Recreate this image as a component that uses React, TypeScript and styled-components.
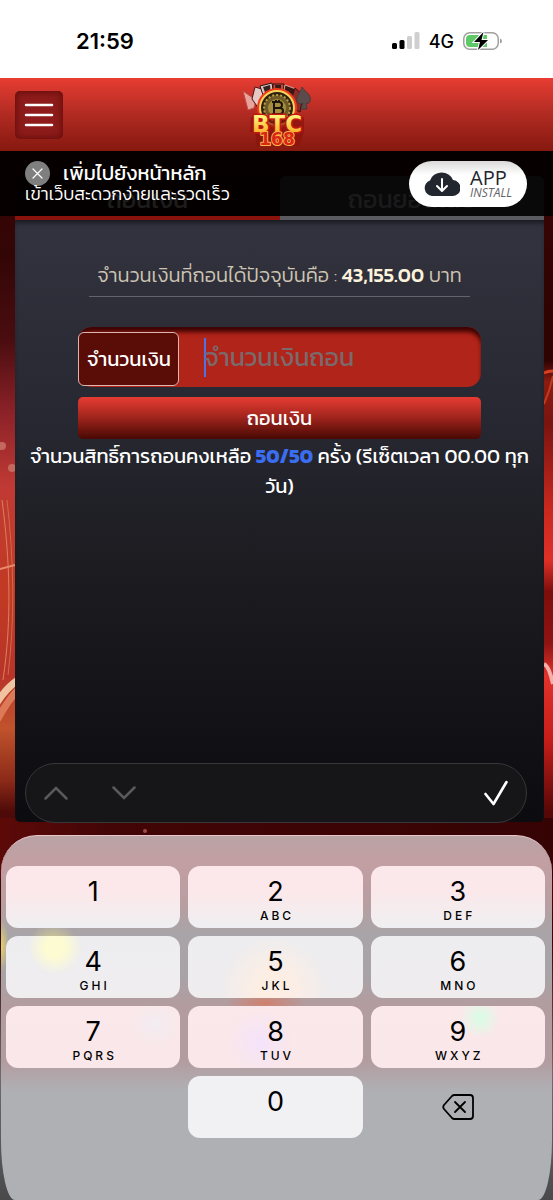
import React from "react";
import styled, { createGlobalStyle } from "styled-components";

const thai = `Kanit, Prompt, "Noto Sans", sans-serif`;
const system = `Inter, "Liberation Sans", sans-serif`;

const GlobalStyle = createGlobalStyle`
  *, *::before, *::after { box-sizing: border-box; }
  body { margin: 0; background: #2a0404; font-family: ${thai}; }
  button, input { font: inherit; color: inherit; }
  button { border: 0; padding: 0; cursor: pointer; background: none; }
  p { margin: 0; }
`;

const Page = styled.div`
  position: relative;
  display: flex;
  flex-direction: column;
  min-height: 100vh;
  overflow: hidden;
`;

const Artwork = styled.svg`
  position: absolute;
  inset: 0;
  width: 100%;
  height: 100%;
  z-index: -1;
`;

const StatusBar = styled.div`
  display: flex;
  align-items: center;
  justify-content: space-between;
  height: 78px;
  padding: 4px 51px 0 76px;
  background: #fff;
  color: #000;
  font-family: ${system};
`;

const Clock = styled.time`
  font-size: 22px;
  font-weight: 600;
`;

const StatusIcons = styled.div`
  display: flex;
  align-items: center;
  gap: 9px;
  font-size: 18px;
  font-weight: 500;
`;

const Header = styled.header`
  display: grid;
  grid-template-columns: 1fr auto 1fr;
  align-items: center;
  height: 73px;
  padding: 0 15px;
  background: linear-gradient(#e73d32, #b02a22 50%, #86190f);
`;

const MenuButton = styled.button`
  display: grid;
  place-items: center;
  width: 48px;
  height: 48px;
  border-radius: 5px;
  background: #8e1c1a;
  box-shadow: inset 0 0 6px 2px #6a0f0e;
`;

const LogoLink = styled.a`
  display: block;
  height: 66px;
`;

const Body = styled.main`
  position: relative;
  display: flex;
  flex: 1;
  flex-direction: column;
  padding: 25px 9px 13px 15px;
`;

const InstallBanner = styled.aside`
  position: absolute;
  z-index: 1;
  top: 0;
  left: 0;
  right: 0;
  display: flex;
  align-items: center;
  justify-content: space-between;
  height: 65px;
  padding: 0 26px 0 25px;
  background: rgba(0, 0, 0, 0.87);
  color: #fff;
`;

const BannerCopy = styled.div`
  padding-bottom: 3px;
`;

const BannerTitle = styled.div`
  display: flex;
  align-items: center;
  gap: 13px;
  height: 24px;
  font-size: 20px;
  line-height: 24px;
`;

const BannerText = styled.p`
  font-size: 18px;
  font-weight: 300;
  line-height: 18px;
`;

const CloseButton = styled.button`
  display: grid;
  place-items: center;
  width: 25px;
  height: 25px;
  border-radius: 50%;
  background: #7f7f7f;
`;

const InstallButton = styled.button`
  display: flex;
  align-items: center;
  gap: 10px;
  height: 46px;
  padding: 0 15px;
  border-radius: 23px;
  background: linear-gradient(#d9d9d9, #fff 30%);
  color: #22262e;
  font-family: "Open Sans", sans-serif;
  text-align: left;
`;

const InstallLabel = styled.span`
  display: grid;
  font-size: 20px;
  line-height: 18px;
`;

const InstallHint = styled.em`
  font-size: 12px;
  line-height: 12px;
  color: #5f6268;
`;

const Tabs = styled.nav`
  display: grid;
  grid-template-columns: 1fr 1fr;
`;

const Tab = styled.button<{ $active?: boolean }>`
  height: 44px;
  padding-top: 6px;
  border-bottom: 4px solid ${(p) => (p.$active ? "#8a140d" : "#5a5a61")};
  border-radius: 6px 6px 0 0;
  background: ${(p) => (p.$active ? "#2a0303" : "#44454d")};
  color: ${(p) => (p.$active ? "#dcdcdc" : "#c4c4ca")};
  font-size: 25px;
  line-height: 34px;
`;

const Panel = styled.section`
  display: flex;
  flex: 1;
  flex-direction: column;
  align-items: center;
  border-radius: 0 0 5px 5px;
  background: linear-gradient(#32333e, #262730 35%, #1d1d22 55%, #0c0c10);
  box-shadow: inset 0 5px 5px -2px #181920;
  color: #fff;
`;

const Balance = styled.p`
  width: 72%;
  margin-top: 39px;
  padding-bottom: 5px;
  border-bottom: 1px solid #62636b;
  color: #cdc4b2;
  font-size: 20px;
  font-weight: 300;
  line-height: 32px;
  text-align: center;
  white-space: nowrap;
`;

const Amount = styled.strong`
  color: #fdf3dc;
  font-weight: 500;
`;

const Form = styled.form`
  display: flex;
  flex-direction: column;
  gap: 10px;
  width: 76%;
  margin-top: 30px;
`;

const Field = styled.div`
  display: flex;
  align-items: stretch;
  height: 60px;
  padding: 5px 14px 1px 0;
  border-radius: 14px;
  background: #b02419;
  box-shadow: inset 0 6px 4px -1px #3d0403;
`;

const FieldLabel = styled.label`
  display: grid;
  flex: none;
  place-items: center;
  width: 101px;
  border: 1px solid #dcb6b0;
  border-radius: 6px;
  background: #5a0c06;
  font-size: 20px;
`;

const Entry = styled.div`
  display: flex;
  flex: 1;
  align-items: center;
  min-width: 0;
  padding-left: 25px;

  &::before {
    content: "";
    width: 2px;
    height: 39px;
    margin-bottom: 4px;
    background: #4a74e6;
  }
`;

const AmountInput = styled.input`
  flex: 1;
  min-width: 0;
  height: 100%;
  margin-left: -2px;
  padding: 0 0 4px;
  border: 0;
  outline: 0;
  background: transparent;
  font-size: 25px;

  &::placeholder {
    color: #7b6a6c;
    opacity: 1;
  }
`;

const SubmitButton = styled.button`
  height: 42px;
  border-radius: 5px;
  background: linear-gradient(#e63c32, #a6261e 45%, #480904);
  font-size: 20px;
`;

const Quota = styled.p`
  padding: 2px 12px 0;
  font-size: 20px;
  line-height: 30px;
  text-align: center;
`;

const QuotaCount = styled.strong`
  color: #3b6df0;
  font-weight: 700;
`;

const Dock = styled.footer`
  position: relative;
`;

const Accessory = styled.div`
  position: absolute;
  bottom: calc(100% + 12px);
  left: 25px;
  right: 26px;
  display: flex;
  align-items: center;
  gap: 44px;
  height: 60px;
  padding: 0 18px;
  border: 1px solid #37373a;
  border-radius: 30px;
  background: #161619;
`;

const AccessoryButton = styled.button<{ $end?: boolean; $dim?: boolean }>`
  display: grid;
  margin-left: ${(p) => (p.$end ? "auto" : "0")};
  color: ${(p) => (p.$dim ? "#5a5a5c" : "#fff")};
`;

const Keypad = styled.div`
  display: grid;
  grid-template-columns: repeat(3, 1fr);
  grid-auto-rows: 62px;
  gap: 8px;
  margin: 0 1px;
  padding: 30px 7px 62px 5px;
  border-top: 1px solid #e9c6ca;
  border-radius: 36px 36px 14px 14px / 36px 36px 60px 60px;
  background:
    radial-gradient(circle at 52px 113px, rgba(240, 230, 130, 0.8), transparent 26px),
    radial-gradient(ellipse 8px 26px at 0 110px, rgba(235, 215, 100, 0.9), transparent),
    radial-gradient(ellipse 40px 12px at 264px 167px, rgba(215, 120, 95, 0.8), transparent),
    linear-gradient(
      #b9a3a5, #c29fa3 25px, #b99ea1 65px, #a9a4a7 95px, #a8a3a6 140px,
      #b39c9f 170px, #b39ca0 225px, #afb0b4 255px, #afb0b4
    );
  color: #000;
  font-family: ${system};
`;

const Key = styled.button<{ $fill: string }>`
  display: flex;
  flex-direction: column;
  align-items: center;
  padding-top: 10px;
  border-radius: 12px;
  background: ${(p) => p.$fill};
`;

const Digit = styled.span`
  font-size: 27px;
  line-height: 32px;
`;

const Letters = styled.span`
  padding-left: 3px;
  font-size: 12px;
  font-weight: 500;
  line-height: 16px;
  letter-spacing: 3px;
`;

const DeleteKey = styled.button`
  display: grid;
  grid-column: 3;
  place-items: center;
`;

const warm = "linear-gradient(#fbe8ea, #fae7e9)";
const keys = [
  { digit: "1", letters: "", fill: "linear-gradient(#fce8ea 40%, #efeff1)" },
  { digit: "2", letters: "ABC", fill: "linear-gradient(#fce8ea 40%, #efeff1)" },
  { digit: "3", letters: "DEF", fill: "linear-gradient(#fae8ea 40%, #efeff1)" },
  {
    digit: "4",
    letters: "GHI",
    fill: "radial-gradient(circle at 49px 11px, #fdfbd2 10px, rgba(253,250,215,0) 27px), linear-gradient(#ededef, #f0edef)",
  },
  {
    digit: "5",
    letters: "JKL",
    fill: "radial-gradient(circle at 86px 54px, #fdeee4 16px, rgba(252,236,228,0) 54px), linear-gradient(#ededef, #efecee)",
  },
  { digit: "6", letters: "MNO", fill: "linear-gradient(#ededef, #efecee)" },
  { digit: "7", letters: "PQRS", fill: `radial-gradient(circle at 150px 18px, #f2ecf1, rgba(250,232,234,0) 26px), ${warm}` },
  { digit: "8", letters: "TUV", fill: `radial-gradient(circle at 72px 36px, #f4e3fa, rgba(250,232,234,0) 34px), ${warm}` },
  { digit: "9", letters: "WXYZ", fill: `radial-gradient(circle at 109px 12px, #dcfbe6 3px, rgba(250,232,234,0) 20px), ${warm}` },
];

function RedArtwork() {
  return (
    <Artwork viewBox="0 0 553 1200" preserveAspectRatio="none" aria-hidden="true">
      <defs>
        <linearGradient id="left" gradientUnits="userSpaceOnUse" x1="0" y1="151" x2="0" y2="1200">
          <stop offset="0" stopColor="#3a0404" />
          <stop offset="0.1" stopColor="#330606" />
          <stop offset="0.18" stopColor="#4a0d10" />
          <stop offset="0.25" stopColor="#8c2228" />
          <stop offset="0.32" stopColor="#c03a34" />
          <stop offset="0.42" stopColor="#c23a24" />
          <stop offset="0.5" stopColor="#b8342a" />
          <stop offset="0.55" stopColor="#c0532c" />
          <stop offset="0.6" stopColor="#8c2a18" />
          <stop offset="0.63" stopColor="#4e0a08" />
          <stop offset="0.75" stopColor="#3a0404" />
          <stop offset="0.88" stopColor="#6c6c6e" />
          <stop offset="1" stopColor="#4a4a4c" />
        </linearGradient>
        <linearGradient id="right" gradientUnits="userSpaceOnUse" x1="0" y1="151" x2="0" y2="1200">
          <stop offset="0" stopColor="#3a0404" />
          <stop offset="0.15" stopColor="#300303" />
          <stop offset="0.2" stopColor="#300303" />
          <stop offset="0.22" stopColor="#8a1c10" />
          <stop offset="0.26" stopColor="#7a1410" />
          <stop offset="0.34" stopColor="#c8281e" />
          <stop offset="0.39" stopColor="#e03028" />
          <stop offset="0.42" stopColor="#7c0e0c" />
          <stop offset="0.47" stopColor="#8e1412" />
          <stop offset="0.5" stopColor="#e2322c" />
          <stop offset="0.56" stopColor="#c81e1a" />
          <stop offset="0.63" stopColor="#560806" />
          <stop offset="0.75" stopColor="#3a0404" />
          <stop offset="0.88" stopColor="#6c6c6e" />
          <stop offset="1" stopColor="#4a4a4c" />
        </linearGradient>
        <linearGradient id="floor" x1="0" y1="0" x2="1" y2="0">
          <stop offset="0" stopColor="#5c0a08" />
          <stop offset="0.2" stopColor="#430506" />
          <stop offset="1" stopColor="#360304" />
        </linearGradient>
      </defs>
      <rect width="277" height="1200" fill="url(#left)" />
      <rect x="277" width="276" height="1200" fill="url(#right)" />
      <rect y="818" width="553" height="60" fill="url(#floor)" />
      <g fill="none">
        <path d="M2 500C10 560 12 620 3 680" stroke="#d9825a" />
        <path d="M7 500C14 560 15 620 8 675" stroke="#d06a48" />
        <path d="M0 569L15 565" stroke="#e88a6a" strokeWidth="2" />
        <path d="M-4 704Q6 688 18 680" stroke="#f0c4a0" strokeWidth="7" />
        <path d="M-4 722Q8 700 18 690" stroke="#dc7a58" strokeWidth="7" />
        <path d="M544 373Q548 371 553 371" stroke="#d9401f" strokeWidth="3" />
        <path d="M544 404Q550 390 553 376" stroke="#c03a1c" strokeWidth="2" />
        <path d="M544 664Q549 666 553 684" stroke="#f3b0a8" strokeWidth="4" />
      </g>
      <circle cx="2" cy="446" r="4" fill="#c4685e" />
      <circle cx="12" cy="468" r="4" fill="#c4685e" />
      <circle cx="145" cy="831" r="2" fill="#a04a48" />
    </Artwork>
  );
}

function Logo() {
  return (
    <svg width="70" height="66" viewBox="0 0 70 66" role="img" aria-label="BTC 168">
      <defs>
        <linearGradient id="gold" x1="0" y1="0" x2="0" y2="1">
          <stop offset="0.2" stopColor="#fff27a" />
          <stop offset="0.8" stopColor="#f9b52c" />
        </linearGradient>
      </defs>
      <path d="M1 9L14 18L12 26L6 28Z" fill="#e9a39b" stroke="#b94d46" />
      <path d="M10 17L13 5L23 8L17 27Z" fill="#e6c9c4" stroke="#4a1414" />
      <path d="M18 4L30 1L32 14L22 16Z" fill="#d8c6c2" stroke="#2a1010" />
      <path d="M21 5l7-2 1 9-5 1z" fill="#35211f" />
      <path d="M31 2L42 2L41 14L31 14Z" fill="#c94a38" stroke="#2a1010" />
      <path d="M33 3h6v8h-5z" fill="#3a1a16" />
      <path d="M43 3L54 7L48 19L41 14Z" fill="#3a1714" stroke="#d8a99e" />
      <path d="M53 6L61 13L58 30L47 24Z" fill="#8a2c28" stroke="#3d100e" />
      <path d="M60 5C59 10 54 13 55 19C57 23 59 22 61 21L59 27H65L64 21C67 23 69 19 68 15C67 11 62 9 60 5Z" fill="#5b4b4b" stroke="#4c3a3a" />
      <circle cx="35" cy="26" r="20" fill="#ef3a1b" />
      <circle cx="35" cy="26" r="17" fill="#2e210f" stroke="#f4d35a" strokeWidth="2" />
      <circle cx="35" cy="26" r="13" fill="#6d5a26" stroke="#b59a45" strokeWidth="2" strokeDasharray="2 2" />
      <circle cx="35" cy="26" r="9" fill="#a58d3d" />
      <path d="M32 20h5a3 3 0 0 1 0 6h-5zM32 26h6a3 3 0 0 1 0 6h-6zM34 18v2M37 18v2M34 32v2M37 32v2M30 20h2M30 32h2" fill="none" stroke="#1b1408" strokeWidth="2" />
      <path d="M9 35L62 35L62 50L57 64H15L13 50H8Z" fill="#8a120d" opacity="0.7" />
      <g textAnchor="middle" fontFamily='"DejaVu Sans", sans-serif' fontWeight="700" paintOrder="stroke" strokeLinejoin="round">
        <text x="35" y="50" fontSize="23" fill="url(#gold)" stroke="#c2180f" strokeWidth="3">BTC</text>
        <text x="35" y="63" fontSize="17" fill="#d92618" stroke="#ffb347" strokeWidth="2">168</text>
      </g>
    </svg>
  );
}

export default function App() {
  return (
    <Page>
      <GlobalStyle />
      <RedArtwork />
      <StatusBar>
        <Clock>21:59</Clock>
        <StatusIcons>
          <svg width="28" height="18" viewBox="0 0 28 18" aria-hidden="true">
            <rect x="0" y="11" width="5" height="6" rx="1.5" />
            <rect x="7.500" y="8" width="5" height="9" rx="1.5" />
            <rect x="15" y="4" width="5" height="13" rx="1.500" fill="#cfcfcf" />
            <rect x="22.500" y="0" width="5" height="17" rx="1.500" fill="#cfcfcf" />
          </svg>
          <span>4G</span>
          <svg width="39" height="20" viewBox="0 0 39 20" role="img" aria-label="Battery charging">
            <rect x="0.750" y="1.750" width="34.500" height="16.500" rx="6" fill="#fff" stroke="#a0a0a0" strokeWidth="1.500" />
            <path d="M7 4H24V16H7A4 4 0 0 1 3 12V8A4 4 0 0 1 7 4Z" fill="#5fc967" />
            <path d="M37 7.500Q39 8 39 10T37 12.500Z" fill="#a0a0a0" />
            <path d="M20.500 1L11 11H17L15 19L25 9H18.500Z" stroke="#fff" strokeWidth="2" paintOrder="stroke" />
          </svg>
        </StatusIcons>
      </StatusBar>

      <Header>
        <MenuButton type="button" aria-label="Menu">
          <svg width="30" height="24" viewBox="0 0 30 24" aria-hidden="true">
            <path d="M2 2H28M2 12H28M2 22H28" stroke="#fff" strokeWidth="2.500" strokeLinecap="round" />
          </svg>
        </MenuButton>
        <LogoLink href="#">
          <Logo />
        </LogoLink>
      </Header>

      <Body>
        <InstallBanner>
          <BannerCopy>
            <BannerTitle>
              <CloseButton type="button" aria-label="Close">
                <svg width="11" height="11" viewBox="0 0 11 11" aria-hidden="true">
                  <path d="M1 1L10 10M10 1L1 10" stroke="#fff" strokeWidth="1.200" strokeLinecap="round" />
                </svg>
              </CloseButton>
              เพิ่มไปยังหน้าหลัก
            </BannerTitle>
            <BannerText>เข้าเว็บสะดวกง่ายและรวดเร็ว</BannerText>
          </BannerCopy>
          <InstallButton type="button">
            <svg width="36" height="26" viewBox="0 0 36 26" aria-hidden="true">
              <path d="M8 25A8 8 0 0 1 6 9.500A12 11 0 0 1 29 9A8 8 0 0 1 28 25Z" fill="#22262e" />
              <path d="M18 8V19M13 15L18 20L23 15" fill="none" stroke="#fff" strokeWidth="2" strokeLinecap="round" strokeLinejoin="round" />
            </svg>
            <InstallLabel>
              APP
              <InstallHint>INSTALL</InstallHint>
            </InstallLabel>
          </InstallButton>
        </InstallBanner>

        <Tabs>
          <Tab type="button" $active>ถอนเงิน</Tab>
          <Tab type="button">ถอนยอดเสีย</Tab>
        </Tabs>

        <Panel>
          <Balance>
            จำนวนเงินที่ถอนได้ปัจจุบันคือ : <Amount>43,155.00</Amount> บาท
          </Balance>
          <Form onSubmit={(e) => e.preventDefault()}>
            <Field>
              <FieldLabel htmlFor="amount">จำนวนเงิน</FieldLabel>
              <Entry>
                <AmountInput id="amount" inputMode="numeric" placeholder="จำนวนเงินถอน" />
              </Entry>
            </Field>
            <SubmitButton type="submit">ถอนเงิน</SubmitButton>
          </Form>
          <Quota>
            จำนวนสิทธิ์การถอนคงเหลือ <QuotaCount>50/50</QuotaCount> ครั้ง (รีเซ็ตเวลา 00.00 ทุกวัน)
          </Quota>
        </Panel>
      </Body>

      <Dock>
        <Accessory>
          <AccessoryButton type="button" aria-label="Previous field" $dim>
            <svg width="24" height="14" viewBox="0 0 24 14" fill="none" aria-hidden="true">
              <path d="M1.500 12.500L12 2L22.500 12.500" stroke="currentColor" strokeWidth="2.500" strokeLinecap="round" />
            </svg>
          </AccessoryButton>
          <AccessoryButton type="button" aria-label="Next field" $dim>
            <svg width="24" height="14" viewBox="0 0 24 14" fill="none" aria-hidden="true">
              <path d="M1.500 1.500L12 12L22.500 1.500" stroke="currentColor" strokeWidth="2.500" strokeLinecap="round" />
            </svg>
          </AccessoryButton>
          <AccessoryButton type="button" aria-label="Done" $end>
            <svg width="24" height="26" viewBox="0 0 24 26" fill="none" aria-hidden="true">
              <path d="M1.500 14L9.500 24L22.500 2" stroke="currentColor" strokeWidth="2.600" strokeLinecap="round" strokeLinejoin="round" />
            </svg>
          </AccessoryButton>
        </Accessory>
        <Keypad>
          {keys.map((k) => (
            <Key key={k.digit} type="button" $fill={k.fill}>
              <Digit>{k.digit}</Digit>
              {k.letters && <Letters>{k.letters}</Letters>}
            </Key>
          ))}
          <span />
          <Key type="button" $fill="#f1f1f4">
            <Digit>0</Digit>
          </Key>
          <DeleteKey type="button" aria-label="Delete">
            <svg width="32" height="26" viewBox="0 0 32 26" fill="none" stroke="#000" strokeWidth="1.800" strokeLinecap="round" strokeLinejoin="round" aria-hidden="true">
              <path d="M12.500 1H28A3 3 0 0 1 31 4V22A3 3 0 0 1 28 25H12.500Q11 25 10 24L2 15Q0.500 13 2 11L10 2Q11 1 12.500 1Z" />
              <path d="M13 8L23 18M23 8L13 18" />
            </svg>
          </DeleteKey>
        </Keypad>
      </Dock>
    </Page>
  );
}
